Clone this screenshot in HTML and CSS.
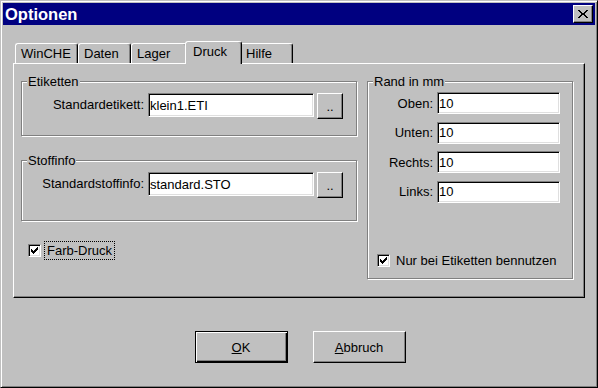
FILE: index.html
```html
<!DOCTYPE html>
<html lang="de">
<head>
  <meta charset="UTF-8" />
  <title>Optionen</title>
  <link rel="stylesheet" href="styles.css">
</head>
<body>
  <div class="window">
    <div class="titlebar">
      <span class="title">Optionen</span>
      <button class="close" title="Schließen">
        <svg width="10" height="8" viewBox="0 0 10 8" shape-rendering="crispEdges">
          <path d="M0 0h2v1h-2z M8 0h2v1h-2z M1 1h2v1h-2z M7 1h2v1h-2z M2 2h2v1h-2z M6 2h2v1h-2z M3 3h4v2h-4z M2 5h2v1h-2z M6 5h2v1h-2z M1 6h2v1h-2z M7 6h2v1h-2z M0 7h2v1h-2z M8 7h2v1h-2z" fill="#000"/>
        </svg>
      </button>
    </div>

    <div class="content">
      <div class="tabs">
        <div class="tab tab-wide">WinCHE</div>
        <div class="tab">Daten</div>
        <div class="tab tab-mid">Lager</div>
        <div class="tab active">Druck</div>
        <div class="tab">Hilfe</div>
      </div>

      <div class="panel">
        <div class="col-left">
          <div class="group group-eti">
            <span class="group-title">Etiketten</span>
            <div class="file-row">
              <label for="etikett">Standardetikett:</label>
              <input id="etikett" class="field file-field" value="klein1.ETI">
              <button class="btn browse">..</button>
            </div>
          </div>

          <div class="group group-sto">
            <span class="group-title">Stoffinfo</span>
            <div class="file-row">
              <label for="stoffinfo">Standardstoffinfo:</label>
              <input id="stoffinfo" class="field file-field" value="standard.STO">
              <button class="btn browse">..</button>
            </div>
          </div>

          <div class="check-row farb">
            <span class="check">
              <svg width="7" height="7" viewBox="0 0 7 7" shape-rendering="crispEdges">
                <path d="M0 2h1v3h-1z M1 3h1v3h-1z M2 4h1v3h-1z M3 3h1v3h-1z M4 2h1v3h-1z M5 1h1v3h-1z M6 0h1v3h-1z" fill="#000"/>
              </svg>
            </span>
            <span class="check-label focused">Farb-Druck</span>
          </div>
        </div>

        <div class="group group-rand">
          <span class="group-title">Rand in mm</span>
          <div class="fields">
            <label for="oben">Oben:</label>
            <input id="oben" class="field" value="10">
            <label for="unten">Unten:</label>
            <input id="unten" class="field" value="10">
            <label for="rechts">Rechts:</label>
            <input id="rechts" class="field" value="10">
            <label for="links">Links:</label>
            <input id="links" class="field" value="10">
          </div>

          <div class="check-row nur">
            <span class="check">
              <svg width="7" height="7" viewBox="0 0 7 7" shape-rendering="crispEdges">
                <path d="M0 2h1v3h-1z M1 3h1v3h-1z M2 4h1v3h-1z M3 3h1v3h-1z M4 2h1v3h-1z M5 1h1v3h-1z M6 0h1v3h-1z" fill="#000"/>
              </svg>
            </span>
            <span class="check-label">Nur bei Etiketten bennutzen</span>
          </div>
        </div>
      </div>

      <div class="actions">
        <button class="btn btn-wide default"><u>O</u>K</button>
        <button class="btn btn-wide"><u>A</u>bbruch</button>
      </div>
    </div>
  </div>
</body>
</html>
```

FILE: styles.css
```css
* {
  box-sizing: border-box;
}

html, body {
  margin: 0;
  height: 100%;
}

body {
  font-family: 'Liberation Sans', Arial, sans-serif;
  font-size: 13px;
  color: #000;
  background: #c0c0c0;
  overflow: hidden;
}

.window {
  width: 598px;
  height: 388px;
  background: #c0c0c0;
  border: 1px solid;
  border-color: #c0c0c0 #000 #000 #c0c0c0;
  box-shadow: inset 1px 1px #fff, inset -1px -1px #808080;
  padding: 2px;
}

.titlebar {
  height: 22px;
  background: #000080;
  color: #fff;
  display: flex;
  align-items: center;
  justify-content: space-between;
  padding-left: 2px;
}

.title {
  font-size: 16.5px;
  font-weight: bold;
  line-height: 22px;
}

.close {
  width: 20px;
  height: 18px;
  margin-right: 2px;
  padding: 0;
  background: #c0c0c0;
  border: 1px solid;
  border-color: #fff #000 #000 #fff;
  box-shadow: inset -1px -1px #808080;
  display: flex;
  align-items: center;
  justify-content: center;
}

.content {
  padding: 16px 10px 0 10px;
}

/* Reiter */
.tabs {
  display: flex;
  align-items: flex-end;
  height: 22px;
  padding-left: 2px;
}

.tab {
  width: 53px;
  height: 20px;
  padding: 0 5px;
  line-height: 19px;
  white-space: nowrap;
  border: 1px solid;
  border-bottom: 0;
  border-color: #fff #000 transparent #fff;
  border-radius: 3px 3px 0 0;
  box-shadow: inset -1px 0 #808080;
}

.tab-wide {
  width: 63px;
}

.tab-mid {
  width: 56px;
}

.tab.active {
  width: 57px;
  height: 23px;
  margin: 0 -2px -1px;
  padding-left: 7px;
  position: relative;
  z-index: 1;
  background: #c0c0c0;
}

.panel {
  height: 235px;
  border: 1px solid;
  border-color: #fff #000 #000 #fff;
  box-shadow: inset -1px -1px #808080;
  display: flex;
  gap: 10px;
  padding: 17px 11px 0 7px;
}

.col-left {
  width: 336px;
  display: flex;
  flex-direction: column;
}

/* Gruppenrahmen */
.group {
  border: 1px solid #808080;
  box-shadow: inset 1px 1px #fff, 1px 1px #fff;
}

.group-title {
  display: block;
  width: fit-content;
  margin: -8px 0 0 5px;
  padding: 0 1px;
  line-height: 15px;
  background: #c0c0c0;
}

.group-eti {
  height: 55px;
}

.group-sto {
  height: 61px;
  margin-top: 24px;
}

.file-row {
  display: flex;
  align-items: flex-start;
  justify-content: flex-end;
  margin-top: 4px;
  padding-right: 13px;
}

.file-row label {
  line-height: 24px;
  margin-right: 4px;
}

.field {
  height: 22px;
  padding: 0 1px;
  font: inherit;
  line-height: 18px;
  color: #000;
  background: #fff;
  border: 1px solid;
  border-color: #808080 #fff #fff #808080;
  box-shadow: inset 1px 1px #000, inset -1px -1px #dfdfdf;
  outline: none;
}

.file-field {
  width: 166px;
  height: 24px;
  line-height: 20px;
}

.btn {
  padding: 0;
  font: inherit;
  color: #000;
  background: #c0c0c0;
  border: 1px solid;
  border-color: #fff #000 #000 #fff;
  box-shadow: inset -1px -1px #808080;
}

.browse {
  width: 26px;
  height: 26px;
  margin-left: 3px;
}

/* Kontrollkaestchen */
.check-row {
  display: flex;
  align-items: center;
}

.check {
  flex: none;
  width: 13px;
  height: 13px;
  background: #fff;
  border: 1px solid;
  border-color: #808080 #fff #fff #808080;
  box-shadow: inset 1px 1px #000, inset -1px -1px #dfdfdf;
  display: flex;
  align-items: center;
  justify-content: center;
}

.check-label {
  margin-left: 3px;
  padding: 0 2px;
  line-height: 17px;
  border: 1px solid transparent;
  white-space: nowrap;
}

.check-label.focused {
  border: 1px dotted #000;
}

.farb {
  margin-top: 20px;
  padding-left: 7px;
}

.group-rand {
  flex: 1;
  height: 198px;
  display: flex;
  flex-direction: column;
}

.fields {
  display: grid;
  grid-template-columns: 1fr 123px;
  grid-auto-rows: 22px;
  column-gap: 4px;
  row-gap: 7.67px;
  margin-top: 3px;
  padding-right: 12px;
}

.fields label {
  text-align: right;
  align-self: center;
}

.fields .field {
  width: 100%;
}

.nur {
  margin-top: auto;
  margin-bottom: 8px;
  padding-left: 9px;
}

.actions {
  display: flex;
  justify-content: center;
  gap: 25px;
  margin-top: 33px;
  padding-left: 2px;
}

.btn-wide {
  width: 93px;
  height: 32px;
}

.btn.default {
  border: 1px solid #000;
  box-shadow: inset 1px 1px #fff, inset -1px -1px #000, inset -2px -2px #808080;
}
```
